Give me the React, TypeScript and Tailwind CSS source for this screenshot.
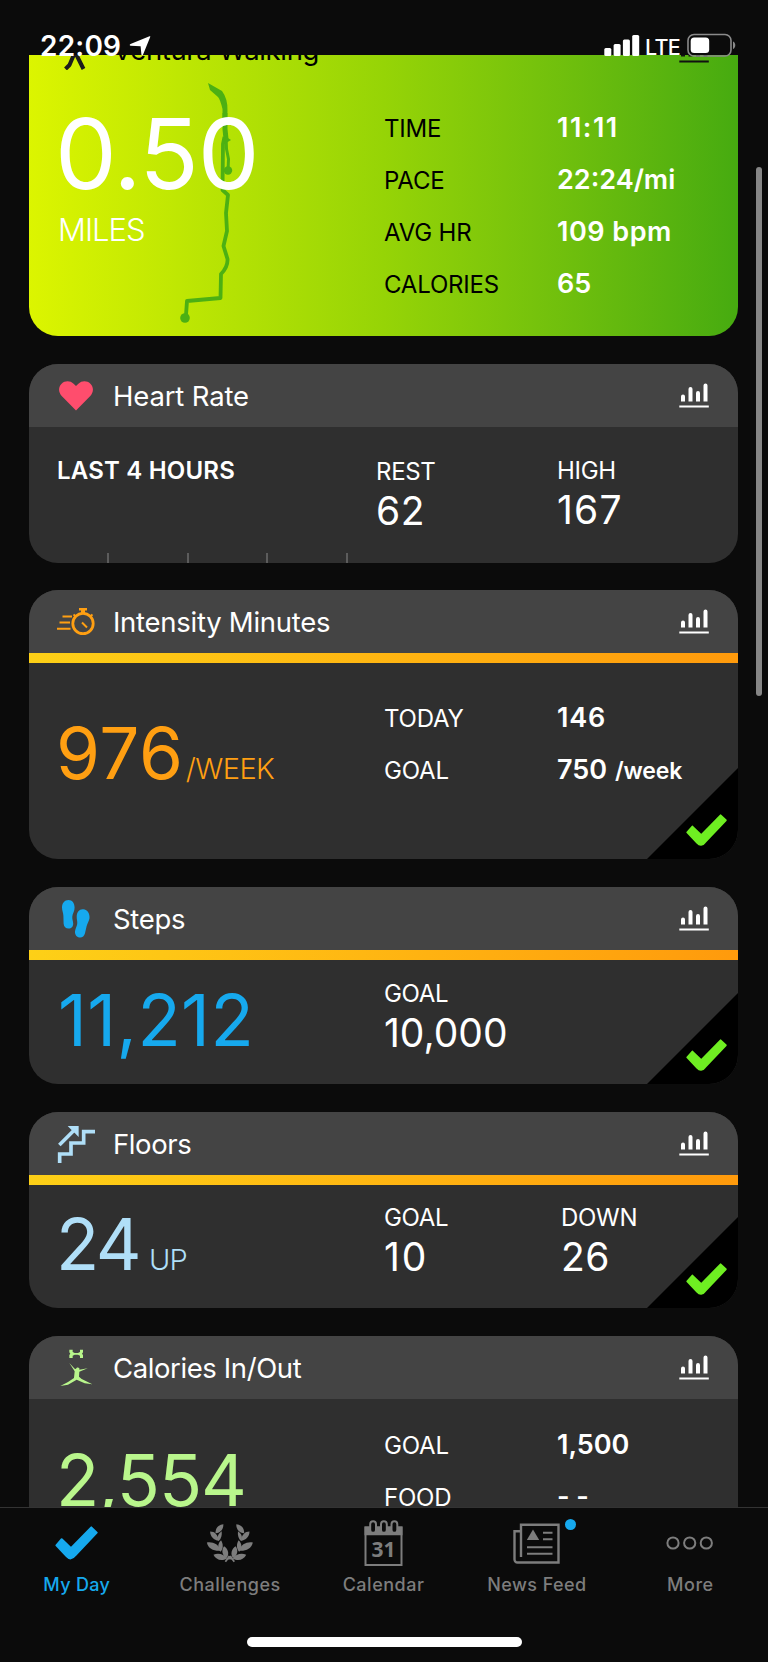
import React, { ReactNode } from "react";

function ChartIcon({ color = "#ffffff" }: { color?: string }) {
  return (
    <svg width="30" height="25" viewBox="0 0 30 25" fill={color}>
      <path d="M2 18.500V13.500a2 2 0 0 1 4 0v5zM9.500 18.500V6a2 2 0 0 1 4 0v12.500zM17 18.500V10a2 2 0 0 1 4 0v8.500zM24.500 18.500V2.500a2 2 0 0 1 4 0v16z" />
      <rect x="0.300" y="22.500" width="29.500" height="2" />
    </svg>
  );
}

function CheckIcon({ className }: { className?: string }) {
  return (
    <svg
      viewBox="0 0 43 34"
      className={className}
      fill="currentColor"
      stroke="currentColor"
      strokeWidth="2"
      strokeLinejoin="round"
    >
      <path d="M6.700 13.200 16 22.200 36.300 1.400 41.700 6.600 20 29.500Q16 35 11.500 30L1.400 19.300Z" />
    </svg>
  );
}

function HeartIcon() {
  return (
    <svg width="34" height="30" viewBox="0 0 34 30" fill="#ff4d6d">
      <path d="M17 29.500 2.700 15C-.8 11.300-.8 5.900 2.600 2.700 6-.6 11.300-.5 14.600 2.700L17 5l2.400-2.300c3.300-3.200 8.600-3.300 12 0 3.400 3.200 3.400 8.600-.1 12.300z" />
    </svg>
  );
}

function StopwatchIcon() {
  return (
    <svg width="38" height="28" viewBox="0 0 38 28" fill="none" stroke="#ff9f12">
      <circle cx="26" cy="15.500" r="10.200" strokeWidth="2.800" />
      <path d="M25 14.500 30 19.500" strokeWidth="2" />
      <path d="M22 1.200h8" strokeWidth="2.400" />
      <path d="M26 1v5" strokeWidth="4" />
      <path d="m16.500 6.500 3 2.500M35.500 6.500l-3 2.500" strokeWidth="2" />
      <path d="M5.500 8.500H15M2.500 14.500H13M0 20.700H13.500" strokeWidth="2" />
    </svg>
  );
}

function StepsIcon() {
  return (
    <svg width="28" height="38" viewBox="0 0 28 38" fill="#16a9ee">
      <path d="M6.500 0C2.500 0 0 3.300 0 7.500c0 3 1.300 5.600 1.400 8.500L1.600 23.500c.2 3.200 2.200 5 5 5s4.700-2 4.600-5c-.1-2.500-1.200-4.500-.9-7 .3-3 2.400-5.500 2.300-9C12.500 3 10.300 0 6.500 0z" />
      <path d="M21.200 9.200c-4-.3-6.200 2.700-6.500 6.800-.2 3 .9 5.400.5 8-.3 2.600-1.900 4.600-2.200 7.300-.3 3.300 1.600 5.700 4.300 6.200 2.900.4 4.900-1.300 5.700-4.300l1.600-7c.7-3 2.500-5 2.900-8 .4-4.500-1.800-8.700-6.300-9z" />
    </svg>
  );
}

function StairsIcon() {
  return (
    <svg width="38" height="38" viewBox="0 0 114 114" fill="none" stroke="#b0dff8">
      <path d="M8 116V87H42V54H80V20H114" strokeWidth="11" />
      <path d="M7 60 52 15" strokeWidth="11" />
      <path d="M32 3H65V36L54 25 43 14Z" fill="#b0dff8" stroke="none" />
    </svg>
  );
}

function CaloriesIcon() {
  return (
    <svg width="33" height="38" viewBox="0 0 99 114" fill="#b9f68c">
      <path d="M28 2h10v7l6 3h10l6-3V2h9v8l-3 4 3 4v9h-9v-7l-6-3H44l-6 3v7H28v-9l3-4-3-4z" />
      <path d="M28 42 44 59 48 60C48 53 61 54 58 62L83 58 58 68 57 83 65 90 97 106 74 103 50 92 24 107 1 111 24 99 42 87 44 67Z" />
    </svg>
  );
}

function LaurelHalf() {
  return (
    <>
      <path d="M52 4C36 6 28 16 28 31 44 30 52 20 52 4Z" />
      <path d="M12 26C26 26 36 36 38 54 23 52 12 42 12 26Z" />
      <path d="M47 25C36 32 32 42 37 55 46 48 48 37 47 25Z" />
      <path d="M2 59C20 56 38 64 44 84 24 86 6 78 2 59Z" />
      <path d="M45 52C34 62 34 76 43 87 52 78 52 64 45 52Z" />
      <path d="M22 96C36 90 54 94 63 107 46 117 29 111 22 96Z" />
      <path d="M54 70C45 82 48 98 62 106 71 92 66 78 54 70Z" />
      <path d="M56 116 68 98 74 101 74 109 66 111 60 119Z" />
    </>
  );
}

function LaurelIcon() {
  return (
    <svg width="48" height="41" viewBox="0 0 144 124" fill="#7d7d7d">
      <LaurelHalf />
      <g transform="translate(143 0) scale(-1 1)">
        <LaurelHalf />
      </g>
    </svg>
  );
}

function CalendarIcon() {
  return (
    <svg width="40" height="47" viewBox="0 0 40 47">
      <path d="M1.500 7.500h36v37.500h-36z" fill="none" stroke="#7d7d7d" strokeWidth="2" />
      <path d="M.5 6.500h38v8.800H.5z" fill="#7d7d7d" />
      <g fill="#0b0b0b" stroke="#7d7d7d" strokeWidth="2">
        <rect x="6.200" y="1.300" width="5.800" height="11.500" rx="2.900" />
        <rect x="17" y="1.300" width="5.800" height="11.500" rx="2.900" />
        <rect x="27.500" y="1.300" width="5.800" height="11.500" rx="2.900" />
      </g>
      <text
        x="19.500"
        y="37"
        textAnchor="middle"
        fontFamily="Noto Sans, sans-serif"
        fontWeight="700"
        fontSize="21"
        fill="#7d7d7d"
      >
        31
      </text>
    </svg>
  );
}

function NewsIcon() {
  return (
    <svg width="47" height="41" viewBox="0 0 47 41" fill="none" stroke="#7d7d7d" strokeWidth="2.400">
      <path d="M8 34V1.700h37.500v37.800H4.500a3 3 0 0 1-3-3V8.200H8" />
      <path d="M14 30.800H39.500M14 24.200H39.500M30 16.200H39.500M30 9.800H39.500" strokeWidth="2" />
      <path d="M13.800 17 20 6.500 26.200 17z" fill="#7d7d7d" stroke="none" />
    </svg>
  );
}

function MoreIcon() {
  return (
    <svg width="48" height="14" viewBox="0 0 48 14" fill="none" stroke="#7d7d7d" strokeWidth="2">
      <circle cx="7" cy="7" r="5.600" />
      <circle cx="23.700" cy="7" r="5.600" />
      <circle cx="40.300" cy="7" r="5.600" />
    </svg>
  );
}

function CardHeader({
  icon,
  title,
  titleClass,
  bar,
}: {
  icon: ReactNode;
  title: string;
  titleClass: string;
  bar?: boolean;
}) {
  return (
    <>
      <div className="flex h-[63px] shrink-0 items-center bg-[#444444] pr-[29px] pl-7">
        <div className="flex w-[38px] justify-center">{icon}</div>
        <h2 className={`ml-[18px] flex-1 pt-px text-[27.5px] leading-[63px] ${titleClass}`}>{title}</h2>
        <ChartIcon />
      </div>
      {bar && <div className="h-2.5 shrink-0 bg-linear-to-r from-[#fdd017] to-[#ff9a0c]" />}
    </>
  );
}

function GoalMet() {
  return (
    <div className="absolute right-0 bottom-0 size-[91px] bg-black [clip-path:polygon(100%_0,100%_100%,0_100%)]">
      <CheckIcon className="absolute right-[11px] bottom-[13px] w-[41px] text-[#6fee22]" />
    </div>
  );
}

function StatRow({
  label,
  value,
  unit,
  valueClass = "",
}: {
  label: string;
  value: string;
  unit?: string;
  valueClass?: string;
}) {
  return (
    <div className="flex h-[52px] items-baseline leading-[52px]">
      <span className="w-[173px] text-[24px] tracking-[-0.2px]">{label}</span>
      <span className={`text-[27px] font-semibold text-white ${valueClass}`}>
        {value}
        {unit && <span className="ml-2 text-[23px] tracking-[-0.2px]">{unit}</span>}
      </span>
    </div>
  );
}

function Stat({ label, value, valueClass = "" }: { label: string; value: string; valueClass?: string }) {
  return (
    <div>
      <div className="text-[24px] leading-6 tracking-[-0.3px]">{label}</div>
      <div className={`mt-[7px] text-[39px] leading-[39px] ${valueClass}`}>{value}</div>
    </div>
  );
}

function StatusBar() {
  return (
    <div className="relative z-10 flex h-[55px] shrink-0 items-start">
      <span className="ml-10 pt-8 text-[28px] leading-7 font-semibold tracking-[0.2px]">22:09</span>
      <svg width="22" height="22" viewBox="0 0 22 22" className="mt-[35px] ml-2" fill="#fff">
        <path d="M20.500 1.200c.7-.2 1 .3.700.9L14 19.700c-.4 1-1.500.9-1.600-.1l-.8-8.400-9.900-.5c-1.200-.1-1.300-1.300-.2-1.700z" />
      </svg>
      <svg width="36" height="21" viewBox="0 0 36 21" className="mt-[35px] ml-auto" fill="#fff">
        <rect x="0.300" y="13" width="7" height="8" rx="1.500" />
        <rect x="9.600" y="9" width="7" height="12" rx="1.500" />
        <rect x="18.900" y="4.500" width="7" height="16.500" rx="1.500" />
        <rect x="28.200" y="0" width="7" height="21" rx="1.500" />
      </svg>
      <span className="ml-[5px] pt-9 text-[21.5px] leading-[22px] tracking-[-0.7px] font-medium">LTE</span>
      <svg width="50" height="24" viewBox="0 0 50 24" className="mt-[33px] mr-[31px] ml-[7px]">
        <rect x="1" y="1.500" width="43" height="21.500" rx="6" fill="none" stroke="#8a8a8a" strokeWidth="1.600" />
        <rect x="3.700" y="4.500" width="18.500" height="15.500" rx="3.500" fill="#fff" />
        <path d="M46 8.500c3 1 3 6.500 0 7.500z" fill="#8a8a8a" />
      </svg>
    </div>
  );
}

function Tab({
  icon,
  label,
  labelClass,
  active,
}: {
  icon: ReactNode;
  label: string;
  labelClass: string;
  active?: boolean;
}) {
  return (
    <div className={`flex flex-1 flex-col items-center ${active ? "text-[#16a9ee]" : "text-[#7d7d7d]"}`}>
      <div className="flex h-12 items-center">{icon}</div>
      <div className={`mt-[9px] text-[18px] leading-[18px] font-medium ${labelClass}`}>{label}</div>
    </div>
  );
}

export default function App() {
  return (
    <div className="relative flex h-[1662px] w-[768px] flex-col overflow-hidden bg-[#0b0b0b] font-[Inter,sans-serif] text-white">
      <StatusBar />

      <main className="h-[1452px] shrink-0 overflow-hidden px-[29px] pr-[30px]">
        <div className="-mt-9 flex flex-col gap-7">
          {/* Activity, scrolled partly under the status bar */}
          <section className="relative h-[317px] shrink-0 overflow-hidden rounded-[29px] bg-linear-to-r from-[#dcf500] via-[#96d406] to-[#46ab10] text-black">
            <svg
              width="60"
              height="250"
              viewBox="0 0 60 250"
              className="absolute top-[60px] left-[146px]"
              fill="none"
              stroke="#4cb013"
              strokeLinejoin="round"
            >
              <path d="M33 4 47 12Q53 20 52.500 32L52 40H47.500V30Q45 20 43 18L35 11Z" fill="#4cb013" stroke="none" />
              <path d="M50 34V50L51 60" strokeWidth="5" />
              <path
                d="M49.500 58 48 65 47.500 111 53 116 51 134 52 152 48.500 167 52.500 180Q53 188 46 195L45.500 219 12 222 11 236"
                strokeWidth="3.800"
              />
              <path d="M51 56 51.500 70 53.500 80 53 92" strokeWidth="3" />
              <path d="M50 57 56 61 51 64Z" fill="#4cb013" stroke="none" />
              <circle cx="53" cy="91.500" r="4.200" fill="#4cb013" stroke="none" />
              <circle cx="10" cy="239" r="4.800" fill="#4cb013" stroke="none" />
            </svg>
            <div className="relative flex h-[63px] items-center pr-[29px] pl-7">
              <svg width="38" height="38" viewBox="0 0 38 38" fill="none" stroke="#1c1c1c" strokeWidth="4">
                <path d="M19 4V16M8.500 37 12.500 33 18 20 22 28 26.500 37" strokeLinejoin="round" />
              </svg>
              <h2 className="ml-[18px] flex-1 text-[27.5px] leading-[63px] tracking-[-0.35px]">Ventura Walking</h2>
              <ChartIcon color="#111111" />
            </div>
            <div className="relative flex pl-[29px]">
              <div className="w-[326px] pt-[23px] text-white">
                <div className="-ml-[3px] text-[98px] leading-[98px] tracking-[-1px]">0.50</div>
                <div className="mt-[11px] text-[31px] leading-[31px] font-[350] tracking-[-1px]">MILES</div>
              </div>
              <div className="pt-5">
                <StatRow label="TIME" value="11:11" valueClass="tracking-[1.5px]" />
                <StatRow label="PACE" value="22:24/mi" />
                <StatRow label="AVG HR" value="109 bpm" valueClass="tracking-[0.5px]" />
                <StatRow label="CALORIES" value="65" />
              </div>
            </div>
          </section>

          <section className="-mb-px flex h-[199px] shrink-0 flex-col overflow-hidden rounded-[29px] bg-[#2f2f2f]">
            <CardHeader icon={<HeartIcon />} title="Heart Rate" titleClass="tracking-[-0.15px]" />
            <div className="flex pl-7">
              <div className="w-[319px] pt-8 text-[24px] leading-6 font-semibold tracking-[0.2px]">LAST 4 HOURS</div>
              <div className="w-[181px] pt-[33px]">
                <Stat label="REST" value="62" valueClass="tracking-[0.5px]" />
              </div>
              <div className="pt-8">
                <Stat label="HIGH" value="167" valueClass="tracking-[1.2px]" />
              </div>
            </div>
            <div className="mt-auto ml-[78px] flex h-2.5 w-[241px] justify-between">
              <i className="w-0.5 bg-[#5c5c5c]" />
              <i className="w-0.5 bg-[#5c5c5c]" />
              <i className="w-0.5 bg-[#5c5c5c]" />
              <i className="w-0.5 bg-[#5c5c5c]" />
            </div>
          </section>

          <section className="relative h-[269px] shrink-0 overflow-hidden rounded-[29px] bg-[#2f2f2f]">
            <CardHeader icon={<StopwatchIcon />} title="Intensity Minutes" titleClass="tracking-[-0.27px]" bar />
            <div className="flex pl-[29px]">
              <div className="-ml-0.5 flex w-[328px] items-baseline pt-[55px] text-[#ff9f12]">
                <span className="text-[71px] leading-[70px] tracking-[0.7px]">976</span>
                <span className="ml-0.5 text-[29px] font-[350] tracking-[-0.6px]">/WEEK</span>
              </div>
              <div className="pt-[29px]">
                <StatRow label="TODAY" value="146" valueClass="tracking-[0.8px]" />
                <StatRow label="GOAL" value="750" unit="/week" />
              </div>
            </div>
            <GoalMet />
          </section>

          <section className="relative h-[197px] shrink-0 overflow-hidden rounded-[29px] bg-[#2f2f2f]">
            <CardHeader icon={<StepsIcon />} title="Steps" titleClass="tracking-[-0.3px]" bar />
            <div className="flex pl-[29px]">
              <div className="w-[326px] pt-[25px] text-[71px] leading-[71px] tracking-[0.4px] text-[#16a9ee]">
                11,212
              </div>
              <div className="pt-[22px]">
                <Stat label="GOAL" value="10,000" />
              </div>
            </div>
            <GoalMet />
          </section>

          <section className="relative h-[196px] shrink-0 overflow-hidden rounded-[29px] bg-[#2f2f2f]">
            <CardHeader icon={<StairsIcon />} title="Floors" titleClass="tracking-[-0.4px]" bar />
            <div className="flex pl-[29px]">
              <div className="-ml-0.5 flex w-[328px] items-baseline pt-6 text-[#b0dff8]">
                <span className="text-[71px] leading-[70px] tracking-[-2.5px]">24</span>
                <span className="ml-2.5 text-[29px] font-[350] tracking-[-0.8px]">UP</span>
              </div>
              <div className="w-[177px] pt-[21px]">
                <Stat label="GOAL" value="10" valueClass="tracking-[2px]" />
              </div>
              <div className="pt-[21px]">
                <Stat label="DOWN" value="26" valueClass="tracking-[0.5px]" />
              </div>
            </div>
            <GoalMet />
          </section>

          <section className="h-[269px] shrink-0 overflow-hidden rounded-[29px] bg-[#2f2f2f]">
            <CardHeader icon={<CaloriesIcon />} title="Calories In/Out" titleClass="tracking-[-0.4px]" />
            <div className="flex pl-[29px]">
              <div className="-ml-0.5 w-[328px] pt-[46px] text-[71px] leading-[70px] tracking-[-1px] text-[#b9f68c]">
                2,554
              </div>
              <div className="pt-5">
                <StatRow label="GOAL" value="1,500" />
                <StatRow label="FOOD" value="- -" />
              </div>
            </div>
          </section>
        </div>
      </main>

      <nav className="flex flex-1 flex-col items-center border-t border-[#333333] bg-[#0b0b0b]">
        <div className="flex w-full pt-[11px] pr-px">
          <Tab icon={<CheckIcon className="w-[43px]" />} label="My Day" labelClass="tracking-[0.3px]" active />
          <Tab icon={<LaurelIcon />} label="Challenges" labelClass="tracking-[0.5px]" />
          <Tab icon={<CalendarIcon />} label="Calendar" labelClass="tracking-[0.5px]" />
          <Tab
            icon={
              <div className="relative">
                <NewsIcon />
                <span className="absolute -top-1 -right-4 size-[11px] rounded-full bg-[#16a9ee]" />
              </div>
            }
            label="News Feed"
            labelClass="tracking-[0.4px]"
          />
          <Tab icon={<MoreIcon />} label="More" labelClass="tracking-[0.5px]" />
        </div>
        <div className="mt-[43px] h-2.5 w-[275px] rounded-full bg-white" />
      </nav>

      {/* Scroll indicator */}
      <div className="absolute top-[167px] right-1.5 h-[529px] w-1.5 rounded-full bg-[#868686]" />
    </div>
  );
}
